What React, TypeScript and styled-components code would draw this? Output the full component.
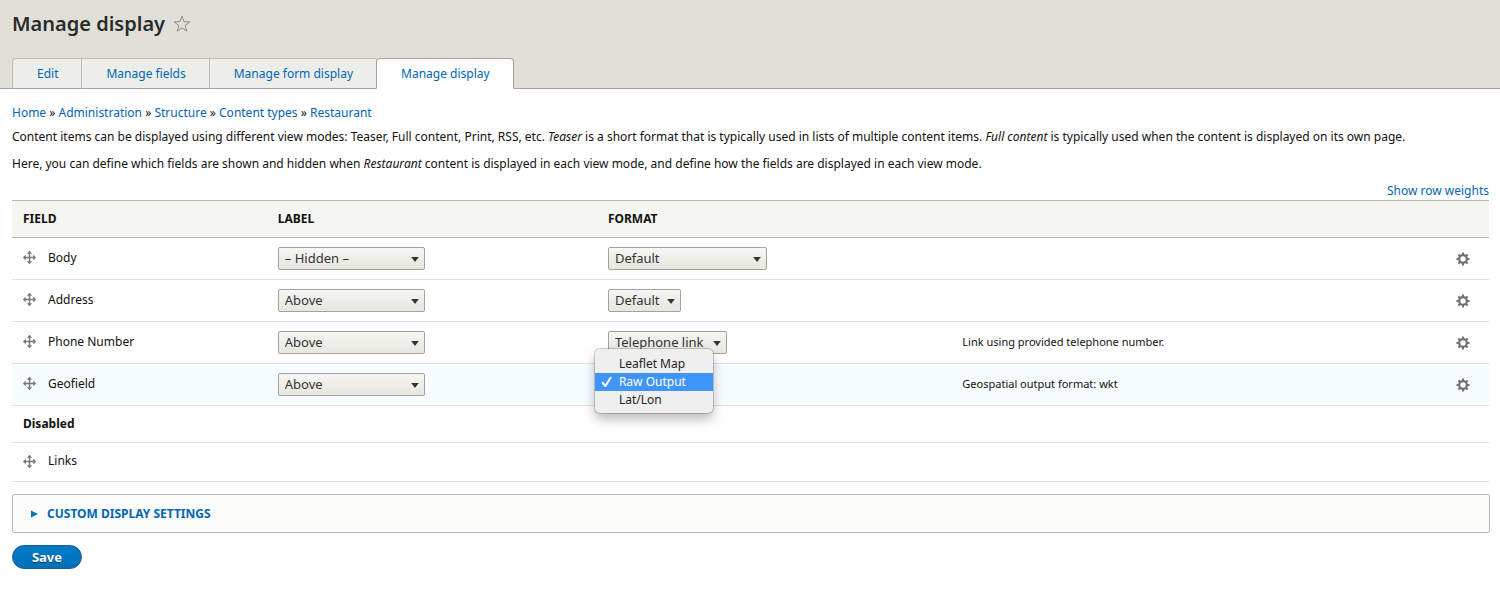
import React from "react";
import styled, { createGlobalStyle } from "styled-components";

const BODY_FONT = `"Noto Sans", "Lucida Grande", sans-serif`;
const LINK = "#0066b3";

const GlobalStyle = createGlobalStyle`
  *, *::before, *::after { box-sizing: border-box; }
  body {
    margin: 0;
    background: #fff;
    color: #111;
    font: 12px/18px ${BODY_FONT};
  }
`;

const Header = styled.header`
  display: flex;
  flex-direction: column;
  justify-content: space-between;
  height: 89px;
  padding: 10px 12px 0;
  background: #e0e0d8;
  border-bottom: 1px solid #a3a39e;
`;

const TitleRow = styled.div`
  display: flex;
  align-items: center;
  gap: 8px;
`;

const Title = styled.h1`
  margin: 0;
  font-size: 20px;
  line-height: 28px;
  font-weight: 600;
  color: #2b2b2b;
`;

const StarButton = styled.button`
  display: flex;
  padding: 0;
  border: 0;
  background: none;
`;

const Tabs = styled.nav`
  display: flex;
  margin-bottom: -1px;
`;

const Tab = styled.a<{ $active?: boolean }>`
  height: 31px;
  padding: 0 23px 0 24px;
  border: 1px solid ${(p) => (p.$active ? "#a3a39e" : "#bfbfba")};
  border-bottom-color: ${(p) => (p.$active ? "#fff" : "#a3a39e")};
  border-right-width: ${(p) => (p.$active ? "1px" : "0")};
  border-radius: ${(p) => (p.$active ? "4px 4px 0 0" : "0")};
  background: ${(p) => (p.$active ? "#fff" : "#edeeea")};
  color: ${LINK};
  line-height: 30px;
  text-decoration: none;
  &:first-child { border-top-left-radius: 4px; }
`;

const Content = styled.main`
  padding: 15px 11px 0 12px;
`;

const Link = styled.a`
  color: ${LINK};
  text-decoration: none;
`;

const Breadcrumb = styled.nav`
  margin-bottom: 6px;
`;

const Help = styled.p`
  margin: 0 0 9px;
`;

const Toggle = styled.div`
  display: flex;
  justify-content: flex-end;
`;

const Table = styled.table`
  width: 100%;
  table-layout: fixed;
  border-collapse: collapse;
`;

const Col = styled.col<{ $width?: string }>`
  width: ${(p) => p.$width ?? "auto"};
`;

const HeadRow = styled.tr`
  height: 37px;
  background: #f5f5f1;
  border-top: 1px solid #b7b7ac;
  border-bottom: 1px solid #b7b7ac;
`;

const HeadCell = styled.th`
  padding: 0 11px;
  text-align: left;
  font-weight: 700;
  text-transform: uppercase;
`;

const Row = styled.tr<{ $size?: "field" | "region" | "plain"; $highlight?: boolean }>`
  height: ${(p) => ({ field: 42, region: 37, plain: 39 })[p.$size ?? "field"]}px;
  background: ${(p) => (p.$highlight ? "#f6fcff" : "#fff")};
  border-bottom: 1px solid #e0e0dc;
`;

const Cell = styled.td<{ $strong?: boolean }>`
  padding: 0 11px;
  font-weight: ${(p) => (p.$strong ? 700 : 400)};
`;

const NameCell = styled(Cell)`
  padding-bottom: 2px;
`;

const SummaryCell = styled(NameCell)`
  font-size: 11px;
`;

const FieldName = styled.div`
  display: flex;
  align-items: center;
  gap: 12px;
`;

const DragHandle = styled.a`
  display: flex;
`;

const SelectBox = styled.span<{ $width: number }>`
  position: relative;
  display: block;
  width: ${(p) => p.$width}px;
  height: 23px;
  svg {
    position: absolute;
    right: 6px;
    top: 10px;
    pointer-events: none;
  }
`;

const Select = styled.select`
  appearance: none;
  width: 100%;
  height: 23px;
  padding: 0 16px 1px 6px;
  border: 1px solid #a3a39e;
  border-radius: 2px;
  background: linear-gradient(#f6f6f3, #e7e7df);
  color: #333;
  font: 13px/20px ${BODY_FONT};
`;

const PopupAnchor = styled.div`
  position: relative;
  height: 23px;
`;

const Popup = styled.div`
  position: absolute;
  left: -13px;
  top: -24px;
  z-index: 1;
  width: 118px;
  padding: 6px 0 4px;
  border-radius: 5px;
  background: #efefef;
  box-shadow: 0 0 0 1px rgba(0, 0, 0, 0.17), 0 6px 12px rgba(0, 0, 0, 0.28);
`;

const Option = styled.button<{ $selected?: boolean }>`
  display: flex;
  align-items: center;
  width: 100%;
  height: 18px;
  padding: 0 0 0 6px;
  border: 0;
  background: ${(p) => (p.$selected ? "#4095fd" : "transparent")};
  color: ${(p) => (p.$selected ? "#fff" : "#222")};
  font: 12px/18px ${BODY_FONT};
  text-align: left;
`;

const CheckSlot = styled.span`
  display: flex;
  width: 18px;
`;

const GearCell = styled.td`
  padding: 0 19px 0 0;
`;

const GearButton = styled.button`
  display: flex;
  margin-left: auto;
  padding: 0;
  border: 0;
  background: none;
`;

const Details = styled.details`
  margin: 12px -1px 12px 0;
  border: 1px solid #b9b9b4;
  border-radius: 2px;
  background: #fcfcfa;
`;

const Summary = styled.summary`
  display: flex;
  align-items: center;
  gap: 9px;
  height: 37px;
  padding: 0 18px;
  color: ${LINK};
  font-weight: 700;
  text-transform: uppercase;
  list-style: none;
`;

const Save = styled.button`
  display: block;
  width: 70px;
  height: 24px;
  padding: 0;
  border: 1px solid #1e5c90;
  border-radius: 20px;
  background: linear-gradient(#007bc6, #0071b8);
  color: #fff;
  font: 700 13px/20px ${BODY_FONT};
  text-shadow: 0 1px 0 rgba(0, 0, 0, 0.5);
`;

const StarIcon = () => (
  <svg width="18" height="18" viewBox="0 0 18 18" fill="none" stroke="#8c8c7c" strokeWidth="1" aria-hidden="true">
    <path d="M9 1.2 11 6.7 16.8 6.9 12.2 10.5 13.8 16.2 9 12.9 4.2 16.2 5.8 10.5 1.2 6.9 7 6.7Z" />
  </svg>
);

const MoveIcon = () => (
  <svg width="13" height="13" viewBox="1 1 14 14" fill="#787878" aria-hidden="true">
    <path d="M14.9 7.75l-2.2-2.2c-.4-.4-.7-.2-.7.3V7.2H8.8V4h1.3c.5 0 .7-.3.3-.7L8.3 1.1c-.2-.2-.4-.2-.6 0L5.6 3.3c-.4.4-.2.7.3.7h1.3v3.2H4V5.9c0-.5-.3-.7-.7-.3L1.1 7.7c-.2.2-.2.4 0 .6l2.2 2.1c.4.4.7.2.7-.3V8.8h3.2V12H5.9c-.5 0-.7.3-.3.7l2.1 2.2c.2.2.4.2.6 0l2.1-2.2c.4-.4.2-.7-.3-.7H8.8V8.8H12v1.3c0 .5.3.7.7.3l2.2-2.1c.1-.2.1-.4 0-.55z" />
  </svg>
);

const GearIcon = () => (
  <svg width="14" height="14" viewBox="0 0 16 16" aria-hidden="true">
    <g fill="none" stroke="#6f6f6f">
      {[0, 45, 90, 135, 180, 225, 270, 315].map((a) => (
        <path key={a} d="M8 0.5v3" strokeWidth="2.2" transform={`rotate(${a} 8 8)`} />
      ))}
      <circle cx="8" cy="8" r="4.4" strokeWidth="2.5" />
    </g>
  </svg>
);

const ArrowIcon = () => (
  <svg width="8" height="5" viewBox="0 0 8 5" fill="#333" aria-hidden="true">
    <path d="M0.2 0h7.6L4 4.9z" />
  </svg>
);

const CheckIcon = () => (
  <svg width="12" height="12" viewBox="0 0 12 12" fill="none" stroke="#fff" strokeWidth="2" strokeLinecap="round" strokeLinejoin="round" aria-hidden="true">
    <path d="M1.8 6.8 4.4 10 9.6 1.8" />
  </svg>
);

const TriangleIcon = () => (
  <svg width="7" height="8" viewBox="0 0 7 8" fill="#0071b8" aria-hidden="true">
    <path d="M0 0.6 7 4 0 7.6z" />
  </svg>
);

interface DropdownProps {
  label: string;
  value: string;
  width: number;
}

const Dropdown = ({ label, value, width }: DropdownProps) => (
  <SelectBox $width={width}>
    <Select aria-label={label} defaultValue={value}>
      <option>{value}</option>
    </Select>
    <ArrowIcon />
  </SelectBox>
);

const FieldLabel = ({ name }: { name: string }) => (
  <FieldName>
    <DragHandle href="#" aria-label={`Drag ${name}`}>
      <MoveIcon />
    </DragHandle>
    {name}
  </FieldName>
);

const FormatMenu = () => (
  <PopupAnchor>
    <Popup role="listbox" aria-label="Format for Geofield">
      {["Leaflet Map", "Raw Output", "Lat/Lon"].map((name) => {
        const selected = name === "Raw Output";
        return (
          <Option key={name} role="option" aria-selected={selected} $selected={selected}>
            <CheckSlot>{selected && <CheckIcon />}</CheckSlot>
            {name}
          </Option>
        );
      })}
    </Popup>
  </PopupAnchor>
);

const tabs = ["Edit", "Manage fields", "Manage form display", "Manage display"];
const trail = ["Home", "Administration", "Structure", "Content types", "Restaurant"];

const fields = [
  { name: "Body", label: "– Hidden –", format: "Default", width: 159, summary: "" },
  { name: "Address", label: "Above", format: "Default", width: 73, summary: "" },
  { name: "Phone Number", label: "Above", format: "Telephone link", width: 119, summary: "Link using provided telephone number." },
  { name: "Geofield", label: "Above", format: "", width: 0, summary: "Geospatial output format: wkt" },
];

export default function App() {
  return (
    <>
      <GlobalStyle />
      <Header>
        <TitleRow>
          <Title>Manage display</Title>
          <StarButton aria-label="Add to shortcuts">
            <StarIcon />
          </StarButton>
        </TitleRow>
        <Tabs aria-label="Tabs">
          {tabs.map((tab) => (
            <Tab key={tab} href="#" $active={tab === "Manage display"}>
              {tab}
            </Tab>
          ))}
        </Tabs>
      </Header>
      <Content>
        <Breadcrumb aria-label="Breadcrumb">
          {trail.map((item, i) => (
            <React.Fragment key={item}>
              {i > 0 && " » "}
              <Link href="#">{item}</Link>
            </React.Fragment>
          ))}
        </Breadcrumb>
        <Help>
          Content items can be displayed using different view modes: Teaser, Full content, Print, RSS, etc. <em>Teaser</em> is
          a short format that is typically used in lists of multiple content items. <em>Full content</em> is typically used
          when the content is displayed on its own page.
        </Help>
        <Help>
          Here, you can define which fields are shown and hidden when <em>Restaurant</em> content is displayed in each view
          mode, and define how the fields are displayed in each view mode.
        </Help>
        <Toggle>
          <Link href="#">Show row weights</Link>
        </Toggle>
        <Table>
          <colgroup>
            <Col $width="17.25%" />
            <Col $width="22.35%" />
            <Col $width="24%" />
            <Col />
            <Col $width="60px" />
          </colgroup>
          <thead>
            <HeadRow>
              <HeadCell>Field</HeadCell>
              <HeadCell>Label</HeadCell>
              <HeadCell colSpan={3}>Format</HeadCell>
            </HeadRow>
          </thead>
          <tbody>
            {fields.map((f) => (
              <Row key={f.name} $highlight={f.name === "Geofield"}>
                <NameCell>
                  <FieldLabel name={f.name} />
                </NameCell>
                <Cell>
                  <Dropdown label={`Label display for ${f.name}`} value={f.label} width={147} />
                </Cell>
                <Cell>
                  {f.format ? <Dropdown label={`Format for ${f.name}`} value={f.format} width={f.width} /> : <FormatMenu />}
                </Cell>
                <SummaryCell>{f.summary}</SummaryCell>
                <GearCell>
                  <GearButton aria-label={`Edit ${f.name} settings`}>
                    <GearIcon />
                  </GearButton>
                </GearCell>
              </Row>
            ))}
            <Row $size="region">
              <Cell colSpan={5} $strong>
                Disabled
              </Cell>
            </Row>
            <Row $size="plain">
              <NameCell colSpan={5}>
                <FieldLabel name="Links" />
              </NameCell>
            </Row>
          </tbody>
        </Table>
        <Details>
          <Summary>
            <TriangleIcon />
            Custom display settings
          </Summary>
        </Details>
        <Save>Save</Save>
      </Content>
    </>
  );
}
